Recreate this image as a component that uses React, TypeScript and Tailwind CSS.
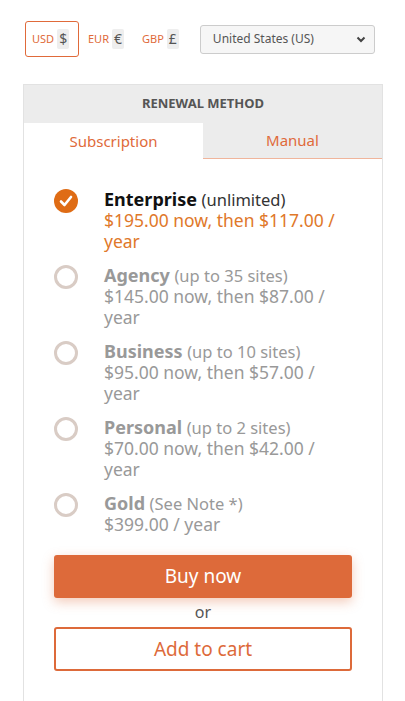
import React from "react";

const plans = [
  { name: "Enterprise", note: "(unlimited)", price: "$195.00 now, then $117.00 / year", checked: true },
  { name: "Agency", note: "(up to 35 sites)", price: "$145.00 now, then $87.00 / year" },
  { name: "Business", note: "(up to 10 sites)", price: "$95.00 now, then $57.00 / year" },
  { name: "Personal", note: "(up to 2 sites)", price: "$70.00 now, then $42.00 / year" },
  { name: "Gold", note: "(See Note *)", price: "$399.00 / year" },
];

export default function App() {
  return (
    <div className="w-[405px] h-[701px] bg-white overflow-hidden flex flex-col" style={{ fontFamily: "'Noto Sans', 'Open Sans', sans-serif" }}>
      <div className="flex items-center pl-[25px] pt-[21px] h-[57px] shrink-0">
        <div className="flex items-center h-[36px] w-[54px] border border-[#e06a3a] rounded-[3px] pl-[6px] gap-[3px]">
          <span className="text-[11px] text-[#e06a3a]">USD</span>
          <span className="bg-[#eeeeee] rounded-[2px] px-[2px] text-[14px] text-[#555] leading-[20px]">$</span>
        </div>
        <div className="flex items-center ml-[9px] gap-[3px]">
          <span className="text-[11px] text-[#e06a3a]">EUR</span>
          <span className="bg-[#eeeeee] rounded-[2px] px-[2px] text-[14px] text-[#555] leading-[20px]">€</span>
        </div>
        <div className="flex items-center ml-[18px] gap-[3px]">
          <span className="text-[11px] text-[#e06a3a]">GBP</span>
          <span className="bg-[#eeeeee] rounded-[2px] px-[2px] text-[14px] text-[#555] leading-[20px]">£</span>
        </div>
        <div className="ml-[21px] flex items-center justify-between w-[175px] h-[29px] bg-[#f6f6f6] border border-[#cccccc] rounded-[3px] pl-[12px] pr-[8px] text-[12px] text-[#555]">
          <span>United States (US)</span>
          <svg width="10" height="7" viewBox="0 0 10 7"><path d="M1.5 1.5 L5 5 L8.5 1.5" fill="none" stroke="#444" strokeWidth="2" /></svg>
        </div>
      </div>

      <div className="mt-[27px] ml-[23px] w-[360px] flex-1 border-x border-t border-[#e2e2e2]">
        <div className="bg-[#ececec] h-[38px] flex items-center justify-center text-[13px] font-bold text-[#555]">RENEWAL METHOD</div>
        <div className="flex bg-[#ececec] h-[36px]">
          <div className="w-[179px] bg-white flex items-center justify-center text-[15px] text-[#e06a3a]">Subscription</div>
          <div className="flex-1 flex items-center justify-center text-[15px] text-[#e06a3a] border-b border-[#f0b59c]">Manual</div>
        </div>
        <div className="pt-[30px] pl-[30px] pr-[30px] flex flex-col">
          <div className="flex flex-col gap-[13px]">
            {plans.map((p) => (
              <div key={p.name} className="flex items-start">
                <div className="w-[50px] shrink-0">
                  {p.checked ? (
                    <div className="w-[24px] h-[24px] rounded-full bg-[#df6c15] flex items-center justify-center">
                      <svg width="14" height="12" viewBox="0 0 14 12"><path d="M2 6.5 L5.5 10 L12 2" fill="none" stroke="white" strokeWidth="2.6" strokeLinecap="round" strokeLinejoin="round" /></svg>
                    </div>
                  ) : (
                    <div className="w-[24px] h-[24px] rounded-full border-[3px] border-[#d9ccc5]" />
                  )}
                </div>
                <div className="text-[17.5px] leading-[21px] w-[248px]">
                  <div className={p.checked ? "text-[#111]" : "text-[#999]"}>
                    <span className="font-bold text-[18px]">{p.name}</span>{" "}
                    <span className={p.checked ? "text-[#333] text-[16.5px]" : "text-[#999] text-[16.5px]"}>{p.note}</span>
                  </div>
                  <div className={p.checked ? "text-[#e0782a]" : "text-[#999]"}>{p.price}</div>
                </div>
              </div>
            ))}
          </div>
          <button className="mt-[20px] w-[298px] h-[43px] bg-[#dd6a3a] rounded-[3px] text-white text-[19px] shadow-[0_4px_12px_rgba(221,106,58,0.35)]">Buy now</button>
          <div className="w-[298px] text-center text-[16px] leading-[29px] text-[#555]">or</div>
          <button className="w-[298px] h-[44px] border-2 border-[#dd6a3a] rounded-[3px] text-[#dd6a3a] text-[19px] bg-white">Add to cart</button>
        </div>
      </div>
    </div>
  );
}
